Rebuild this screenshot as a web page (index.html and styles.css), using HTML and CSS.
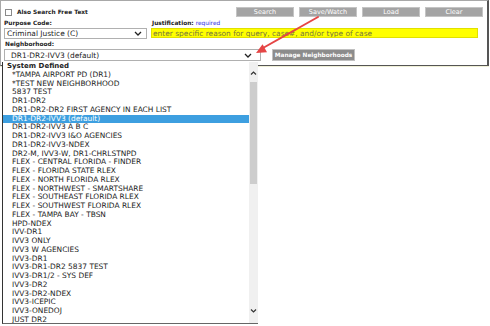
FILE: index.html
```html
<!DOCTYPE html>
<html lang="en">
<head>
  <meta charset="UTF-8">
  <meta name="viewport" content="width=device-width, initial-scale=1">
  <title>Neighborhood Search</title>
  <link rel="stylesheet" href="styles.css">
</head>
<body>

<div class="page">

  <div class="panel">
    <div class="top-row">
      <span class="checkbox"></span>
      <span class="check-label">Also Search Free Text</span>
      <div class="actions">
        <button class="btn">Search</button>
        <button class="btn">Save/Watch</button>
        <button class="btn">Load</button>
        <button class="btn">Clear</button>
      </div>
    </div>

    <div class="fields">
      <label class="label">Purpose Code:</label>
      <label class="label label-just">Justification: <span class="required">required</span></label>
      <div class="select select-purpose">
        <span>Criminal Justice (C)</span>
        <svg class="chev" width="8" height="5" viewBox="0 0 8 5"><path d="M1 1 L4 4 L7 1" fill="none" stroke="#222" stroke-width="1.3"/></svg>
      </div>
      <input class="justify" type="text" placeholder="enter specific reason for query, case#, and/or type of case">
    </div>

    <label class="label label-nb">Neighborhood:</label>
    <div class="nb-row">
      <div class="select select-nb">
        <span>DR1-DR2-IVV3 (default)</span>
        <svg class="chev" width="8" height="5" viewBox="0 0 8 5"><path d="M1 1 L4 4 L7 1" fill="none" stroke="#222" stroke-width="1.3"/></svg>
      </div>
      <button class="btn-manage">Manage Neighborhoods</button>
    </div>
  </div>

  <!-- open dropdown of the neighborhood select -->
  <div class="listbox">
    <div class="options">
      <div class="group">System Defined</div>
      <div class="opt">*TAMPA AIRPORT PD (DR1)</div>
      <div class="opt">*TEST NEW NEIGHBORHOOD</div>
      <div class="opt">5837 TEST</div>
      <div class="opt">DR1-DR2</div>
      <div class="opt">DR1-DR2-DR2 FIRST AGENCY IN EACH LIST</div>
      <div class="opt selected">DR1-DR2-IVV3 (default)</div>
      <div class="opt">DR1-DR2-IVV3 A B C</div>
      <div class="opt">DR1-DR2-IVV3 I&amp;O AGENCIES</div>
      <div class="opt">DR1-DR2-IVV3-NDEX</div>
      <div class="opt">DR2-M, IVV3-W, DR1-CHRLSTNPD</div>
      <div class="opt">FLEX - CENTRAL FLORIDA - FINDER</div>
      <div class="opt">FLEX - FLORIDA STATE RLEX</div>
      <div class="opt">FLEX - NORTH FLORIDA RLEX</div>
      <div class="opt">FLEX - NORTHWEST - SMARTSHARE</div>
      <div class="opt">FLEX - SOUTHEAST FLORIDA RLEX</div>
      <div class="opt">FLEX - SOUTHWEST FLORIDA RLEX</div>
      <div class="opt">FLEX - TAMPA BAY - TBSN</div>
      <div class="opt">HPD-NDEX</div>
      <div class="opt">IVV-DR1</div>
      <div class="opt">IVV3 ONLY</div>
      <div class="opt">IVV3 W AGENCIES</div>
      <div class="opt">IVV3-DR1</div>
      <div class="opt">IVV3-DR1-DR2 5837 TEST</div>
      <div class="opt">IVV3-DR1/2 - SYS DEF</div>
      <div class="opt">IVV3-DR2</div>
      <div class="opt">IVV3-DR2-NDEX</div>
      <div class="opt">IVV3-ICEPIC</div>
      <div class="opt">IVV3-ONEDOJ</div>
      <div class="opt">JUST DR2</div>
    </div>
    <div class="scrollbar">
      <svg class="sb-arrow" width="9" height="6" viewBox="0 0 9 6"><path d="M2 4.5 L4.5 2 L7 4.5" fill="none" stroke="#333" stroke-width="1.2"/></svg>
      <div class="thumb"></div>
      <div class="sb-space"></div>
      <svg class="sb-arrow" width="9" height="6" viewBox="0 0 9 6"><path d="M2 1.5 L4.5 4 L7 1.5" fill="none" stroke="#333" stroke-width="1.2"/></svg>
    </div>
  </div>

  <!-- red annotation arrow -->
  <svg class="annotation" width="490" height="326" viewBox="0 0 490 326">
    <line x1="318" y1="17" x2="263" y2="48" stroke="#e54545" stroke-width="2" stroke-linecap="round"/>
    <polygon points="256,53 262.6,44.2 267,52.2" fill="#e54545"/>
  </svg>

</div>

</body>
</html>
```

FILE: styles.css
```css
body {
  margin: 0;
  background: #fff;
  font-family: "DejaVu Sans", Verdana, sans-serif;
  color: #222;
}
.page {
  position: relative;
  width: 490px;
  height: 326px;
  overflow: hidden;
}

/* search panel */
.panel {
  box-sizing: border-box;
  width: 489px;
  height: 66px;
  border: 1px solid #a8a8a8;
  border-right: 2px solid #555;
  border-bottom: 1px solid #555;
  box-shadow: 0 1px 0 #efefd6;
}
.top-row {
  display: flex;
  align-items: center;
  height: 10px;
  margin-top: 6px;
  padding-left: 4px;
}
.checkbox {
  box-sizing: border-box;
  width: 7px;
  height: 7px;
  border: 1px solid #8a8a8a;
  background: #fff;
}
.check-label {
  margin-left: 5px;
  font-size: 5.85px;
  font-weight: bold;
}
.actions {
  display: flex;
  gap: 5px;
  margin-left: auto;
  margin-right: 4px;
}
.btn {
  box-sizing: border-box;
  width: 58px;
  height: 10px;
  padding: 0;
  border: 1px solid #c4c4c4;
  background: #a4a4a4;
  color: #fff;
  font-family: inherit;
  font-size: 6.5px;
  line-height: 8px;
}

.fields {
  display: grid;
  grid-template-columns: 143px 327px;
  grid-template-rows: 9px 11px;
  column-gap: 4px;
  margin-top: 2px;
  padding-left: 3px;
}
.label {
  display: block;
  font-size: 5.85px;
  font-weight: bold;
  line-height: 9px;
}
.label-just {
  padding-left: 1px;
}
.required {
  color: #2a2ae6;
  font-weight: normal;
}
.label-nb {
  margin-top: 1px;
  padding-left: 4px;
}

.select {
  box-sizing: border-box;
  display: flex;
  align-items: center;
  justify-content: space-between;
  border: 1px solid #b0b0b0;
  background: #fff;
  font-size: 7.45px;
  color: #222;
}
.select-purpose {
  height: 11px;
  padding: 0 4px 0 2px;
}
.select-nb {
  width: 257px;
  height: 12px;
  padding: 0 8px 0 6px;
}
.justify {
  box-sizing: border-box;
  height: 10px;
  margin: 0;
  padding: 0 1px;
  border: 1px solid #e0e000;
  background: #ffff00;
  font-family: inherit;
  font-size: 7.45px;
}
.justify::placeholder {
  color: #76763e;
}

.nb-row {
  display: flex;
  gap: 11px;
  padding-left: 3px;
}
.btn-manage {
  box-sizing: border-box;
  width: 83px;
  height: 12px;
  padding: 0;
  border: 1px solid #c0c0c0;
  background: #8c8c8c;
  color: #fff;
  font-family: inherit;
  font-size: 5.8px;
  font-weight: bold;
}

/* open dropdown list */
.listbox {
  position: absolute;
  left: 2px;
  top: 62px;
  box-sizing: border-box;
  width: 256px;
  height: 262px;
  display: flex;
  border-left: 1px solid #333;
  border-bottom: 1px solid #666;
  background: #fff;
}
.options {
  flex: 1;
  overflow: hidden;
  font-size: 7.45px;
  line-height: 8.75px;
  color: #222;
}
.group {
  padding-left: 4px;
  font-size: 7px;
  font-weight: bold;
}
.opt {
  padding-left: 9px;
  white-space: nowrap;
}
.opt.selected {
  background: #3d9fe0;
  color: #fff;
}
.scrollbar {
  width: 9px;
  display: flex;
  flex-direction: column;
  align-items: center;
  background: #f0f0f0;
}
.sb-arrow {
  display: block;
}
.scrollbar .sb-arrow:first-child {
  margin-top: 8px;
}
.scrollbar .sb-arrow:last-child {
  margin-bottom: 9px;
}
.thumb {
  width: 7px;
  height: 102px;
  margin-top: 6px;
  background: #cdcdcd;
}
.sb-space {
  flex: 1;
}

.annotation {
  position: absolute;
  left: 0;
  top: 0;
  pointer-events: none;
}
```
